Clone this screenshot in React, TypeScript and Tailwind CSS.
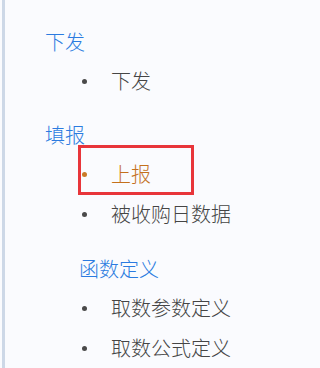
import React from "react"

interface Item {
  label: string
  active?: boolean
}

interface Section {
  title: string
  indent?: boolean
  items: Item[]
}

const SECTIONS: Section[] = [
  { title: "下发", items: [{ label: "下发" }] },
  { title: "填报", items: [{ label: "上报", active: true }, { label: "被收购日数据" }] },
  { title: "函数定义", indent: true, items: [{ label: "取数参数定义" }, { label: "取数公式定义" }] },
]

function Row({ item }: { item: Item }) {
  return (
    <li className="relative flex h-10 items-center">
      <span
        className={`ml-[77px] h-[5px] w-[5px] rounded-full ${item.active ? "bg-[#c97a28]" : "bg-[#4a4a4a]"}`}
      />
      <span className={`ml-[24px] ${item.active ? "text-[#c4701c]" : "text-[#454545]"}`}>{item.label}</span>
      {item.active && (
        <span className="pointer-events-none absolute left-[73px] top-[-9px] h-[50px] w-[116px] border-[3px] border-[#e8353a]" />
      )}
    </li>
  )
}

export default function App() {
  return (
    <div
      className="h-[368px] w-[320px] overflow-hidden bg-[#fafbfe] text-[20px] font-light"
      style={{ fontFamily: '"Noto Sans CJK SC", "Noto Sans", sans-serif' }}
    >
      <div className="ml-[2px] h-full border-l-[3px] border-[#cdd8e7] pt-[22px]">
        {SECTIONS.map((s, i) => (
          <div key={s.title} className={i === 0 ? "" : i === 1 ? "mt-[14px]" : "mt-[15px]"}>
            <div
              className={`flex h-[39px] items-center text-[#2b7be0] ${s.indent ? "pl-[74px]" : "pl-[40px]"}`}
            >
              {s.title}
            </div>
            <ul>
              {s.items.map((it) => (
                <Row key={it.label} item={it} />
              ))}
            </ul>
          </div>
        ))}
      </div>
    </div>
  )
}
